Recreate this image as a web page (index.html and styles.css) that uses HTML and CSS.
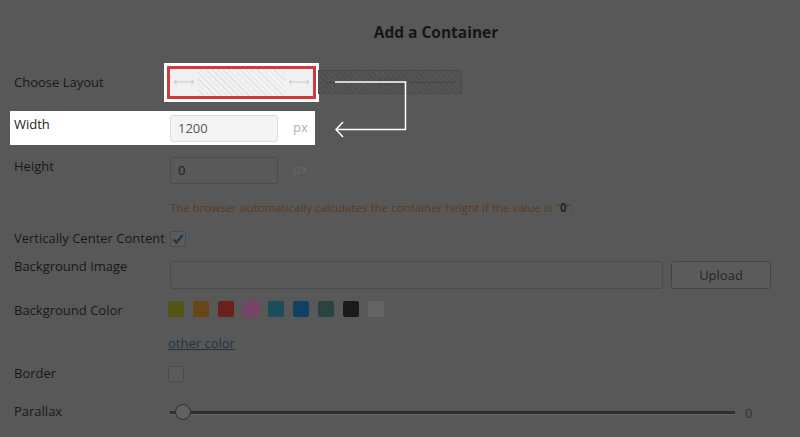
FILE: index.html
```html
<!DOCTYPE html>
<html>
<head>
<meta charset="utf-8">
<link rel="stylesheet" href="styles.css">
</head>
<body>
<div class="page">
  <h1 class="title">Add a Container</h1>
  <div class="form">
    <div class="row row-layout">
      <div class="label">Choose Layout</div>
      <div class="layouts">
        <div class="layout-opt layout-opt--selected">
          <div class="seg seg-side"><svg width="22" height="8" viewBox="0 0 22 8"><path d="M1 4H21M1 4L4 1.5M1 4L4 6.5M21 4L18 1.5M21 4L18 6.5" stroke="#c9c9c9" stroke-width="1" fill="none"/></svg></div>
          <div class="seg seg-mid"></div>
          <div class="seg seg-side"><svg width="22" height="8" viewBox="0 0 22 8"><path d="M1 4H21M1 4L4 1.5M1 4L4 6.5M21 4L18 1.5M21 4L18 6.5" stroke="#c9c9c9" stroke-width="1" fill="none"/></svg></div>
        </div>
        <div class="layout-opt layout-opt--full">
          <span class="full-line"></span>
          <span class="full-text">100%</span>
          <span class="full-line"></span>
        </div>
      </div>
    </div>
    <div class="row row-width">
      <div class="label label-hl">Width</div>
      <div class="input input-hl">1200</div>
      <div class="unit unit-hl">px</div>
    </div>
    <div class="row row-height">
      <div class="label">Height</div>
      <div class="input">0</div>
      <div class="unit">px</div>
    </div>
    <div class="row row-desc">
      <div class="label"></div>
      <div class="desc">The browser automatically calculates the container height if the value is "<b>0</b>".</div>
    </div>
    <div class="row row-vc">
      <div class="label">Vertically Center Content</div>
      <div class="checkbox checkbox--on"><svg width="14" height="14" viewBox="0 0 14 14"><path d="M2.5 7.5L5.5 10.5L11.5 3" stroke="#173a52" stroke-width="2.2" fill="none"/></svg></div>
    </div>
    <div class="row row-bgimg">
      <div class="label">Background Image</div>
      <div class="input input-wide"></div>
      <div class="button">Upload</div>
    </div>
    <div class="row row-bgcolor">
      <div class="label">Background Color</div>
      <div class="swatches">
        <span class="swatch sw-olive"></span>
        <span class="swatch sw-orange"></span>
        <span class="swatch sw-red"></span>
        <span class="swatch sw-pink"></span>
        <span class="swatch sw-teal"></span>
        <span class="swatch sw-blue"></span>
        <span class="swatch sw-darkteal"></span>
        <span class="swatch sw-black"></span>
        <span class="swatch sw-gray"></span>
      </div>
    </div>
    <div class="row row-other">
      <div class="label"></div>
      <a class="link">other color</a>
    </div>
    <div class="row row-border">
      <div class="label">Border</div>
      <div class="checkbox"></div>
    </div>
    <div class="row row-parallax">
      <div class="label">Parallax</div>
      <div class="slider">
        <div class="track"><span class="knob"></span></div>
        <span class="slider-value">0</span>
      </div>
    </div>
  </div>
  <svg class="connector" width="800" height="437" viewBox="0 0 800 437">
    <path d="M335 82H405.5V129.5H336" stroke="#fff" stroke-width="1.5" fill="none"/>
    <path d="M343 122L336 129.5L343 137" stroke="#fff" stroke-width="1.5" fill="none"/>
  </svg>
</div>
</body>
</html>
```
FILE: styles.css
```css
html, body {
  margin: 0;
  padding: 0;
}
body {
  background: #585858;
  font-family: "Open Sans", "Noto Sans", sans-serif;
  font-size: 13px;
  color: #181818;
}
.page {
  position: relative;
  width: 800px;
  height: 437px;
  overflow: hidden;
}
.title {
  margin: 0;
  padding: 21px 0 0 72px;
  text-align: center;
  font-size: 15.5px;
  line-height: 22px;
  font-weight: 700;
  color: #161616;
}
.form {
  padding: 0 25px 0 10px;
}
.row {
  display: flex;
  align-items: flex-start;
  padding: 0 4px;
}
.label {
  width: 156px;
  flex: none;
  line-height: 18px;
}
.row-layout {
  margin-top: 20px;
  height: 38px;
  align-items: center;
}
.layouts {
  display: flex;
  align-items: center;
  gap: 5px;
}
.layout-opt {
  width: 143px;
  height: 27px;
  box-sizing: border-box;
  display: flex;
}
.layout-opt--selected {
  box-shadow: 0 0 0 3px #d13a3b, 0 0 0 6px #fff;
  background: #f1f1f1;
}
.seg {
  display: flex;
  align-items: center;
  justify-content: center;
}
.seg-side {
  width: 28px;
}
.seg-mid {
  flex: 1;
  background: repeating-linear-gradient(45deg, #e2e2e2 0 1px, #f2f2f2 1px 4px);
}
.layout-opt--full {
  width: 144px;
  height: 24px;
  border: 1px solid #4a4a4a;
  background: repeating-linear-gradient(45deg, #4d4d4d 0 1px, #545454 1px 4px);
  align-items: center;
  padding: 0 6px;
  gap: 6px;
}
.full-line {
  flex: 1;
  height: 1px;
  background: #454545;
}
.full-text {
  font-size: 10px;
  color: #474747;
}
.row-width {
  margin-top: 10px;
  width: fit-content;
  background: #fff;
  padding: 4px 7px 3px 4px;
}
.row-height {
  margin-top: 8px;
  padding-top: 4px;
}
.input {
  box-sizing: border-box;
  width: 108px;
  height: 27px;
  border: 1px solid #4b4b4b;
  border-radius: 3px;
  background: #595959;
  padding: 0 7px;
  line-height: 25px;
  color: #202020;
}
.label-hl {
  color: #222;
}
.input-hl {
  background: #f4f4f4;
  border-color: #dcdcdc;
  color: #555;
}
.unit {
  margin-left: 15px;
  line-height: 25px;
  color: #666;
}
.unit-hl {
  color: #b0b0b0;
}
.row-desc {
  margin-top: 15px;
}
.desc {
  font-size: 11.5px;
  line-height: 18px;
  color: #5a3a20;
}
.desc b {
  color: #2e241a;
}
.row-vc {
  margin-top: 12px;
}
.checkbox {
  box-sizing: border-box;
  width: 16px;
  height: 16px;
  margin-top: 2px;
  border: 1px solid #4a4a4a;
  border-radius: 2px;
  background: #5b5b5b;
  display: flex;
  align-items: center;
  justify-content: center;
}
.row-bgimg {
  margin-top: 10px;
}
.input-wide {
  flex: 1;
  width: auto;
  margin-top: 4px;
  height: 28px;
}
.button {
  box-sizing: border-box;
  width: 100px;
  height: 28px;
  margin: 4px 0 0 8px;
  border: 1px solid #444;
  border-radius: 3px;
  background: #5b5b5b;
  text-align: center;
  line-height: 26px;
  color: #262626;
}
.row-bgcolor {
  margin-top: 12px;
}
.swatches {
  display: flex;
  gap: 9px;
  margin-left: -2px;
}
.swatch {
  width: 16px;
  height: 16px;
  border-radius: 2px;
}
.sw-olive { background: #525716; }
.sw-orange { background: #6a4616; }
.sw-red { background: #6a201c; }
.sw-pink { background: #7a4169; }
.sw-teal { background: #1b4e5c; }
.sw-blue { background: #0f4167; }
.sw-darkteal { background: #284443; }
.sw-black { background: #1b1b1b; }
.sw-gray { background: #646464; }
.row-other {
  margin-top: 15px;
}
.link {
  line-height: 18px;
  color: #1f3346;
  text-decoration: underline;
  margin-left: -2px;
}
.row-border {
  margin-top: 12px;
}
.row-border .checkbox {
  margin-left: -2px;
}
.row-parallax {
  margin-top: 20px;
}
.slider {
  flex: 1;
  display: flex;
  align-items: center;
  height: 26px;
  margin-top: -2px;
}
.track {
  position: relative;
  flex: 1;
  height: 3px;
  background: #2f2f2f;
  border-bottom: 1px solid #666;
}
.knob {
  position: absolute;
  left: 5px;
  top: -7px;
  width: 14px;
  height: 14px;
  border-radius: 50%;
  border: 1px solid #2f2f2f;
  background: #616161;
}
.slider-value {
  width: 36px;
  padding-left: 10px;
  box-sizing: border-box;
  color: #3b3122;
}
.connector {
  position: absolute;
  left: 0;
  top: 0;
  pointer-events: none;
}
```
